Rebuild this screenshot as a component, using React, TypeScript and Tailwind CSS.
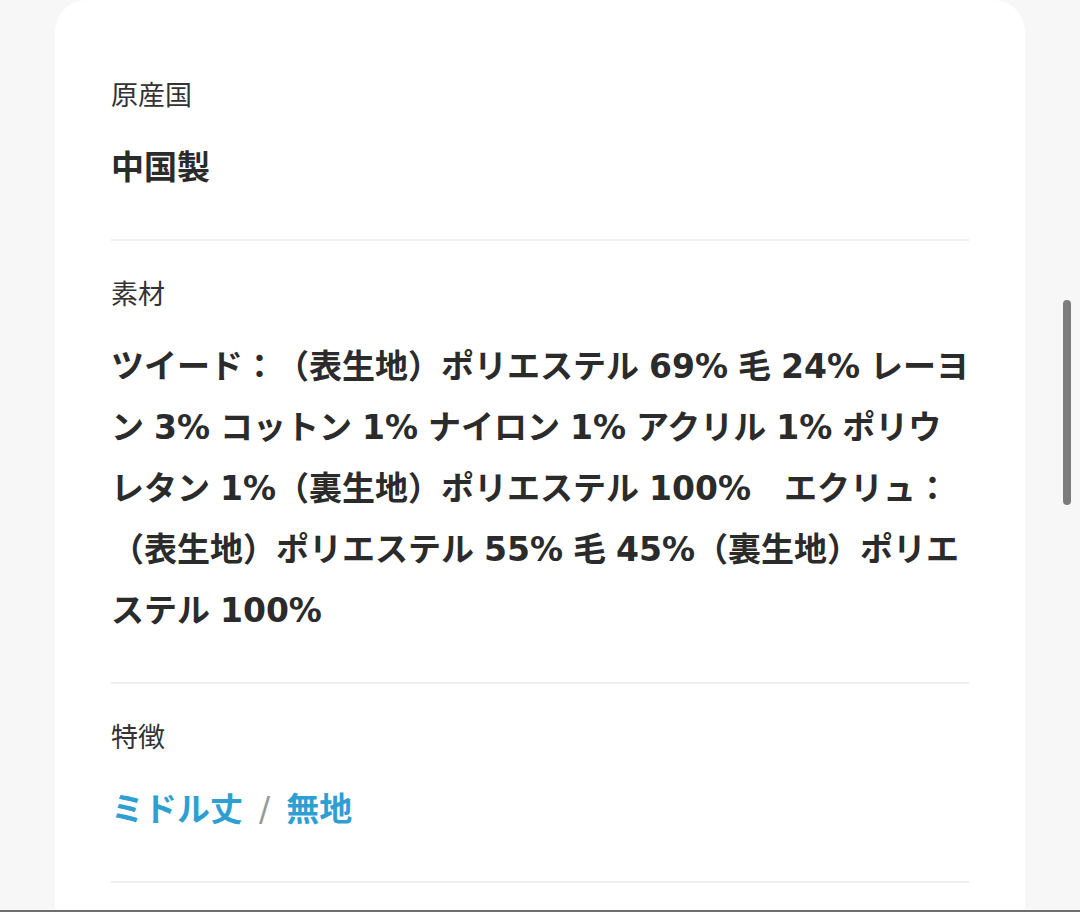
import React from 'react';

const Section = ({ label, children }: { label: string; children: React.ReactNode }) => {
  return (
    <div className="pt-[36px] pb-[41px] border-b-2 border-[#efefef]">
      <p className="text-[27px] leading-[36px] text-[#333333]">{label}</p>
      <div className="mt-[23px] text-[33px] leading-[61px] font-bold text-[#2b2b2b] [word-spacing:-1.5px]">{children}</div>
    </div>
  );
};

const App = () => {
  return (
    <div
      className="relative h-[912px] w-[1080px] overflow-hidden bg-[#f7f7f7] [text-spacing-trim:space-all]"
      style={{ fontFamily: '"DejaVu Sans", "Noto Sans CJK JP", sans-serif' }}
    >
      <div className="ml-[55px] w-[970px] min-h-[960px] rounded-t-[32px] bg-white px-[56px] pt-[42px]">
        <Section label="原産国">中国製</Section>

        <Section label="素材">
          ツイード：（表生地）ポリエステル 69% 毛 24% レーヨン 3% コットン 1% ナイロン 1% アクリル 1% ポリウレタン 1%（裏生地）ポリエステル 100%　エクリュ：（表生地）ポリエステル 55% 毛 45%（裏生地）ポリエステル 100%
        </Section>

        <Section label="特徴">
          <div className="flex items-center">
            <span className="text-[#2f9fd2]">ミドル丈</span>
            <span className="mx-[16px] font-normal text-[#9a9a9a]">/</span>
            <span className="text-[#2f9fd2]">無地</span>
          </div>
        </Section>
      </div>

      {/* scrollbar */}
      <div className="absolute left-[1063px] top-[300px] h-[205px] w-[8px] rounded-full bg-[#7c7c7c]" />

      {/* bottom edge */}
      <div className="absolute bottom-0 left-0 h-[3px] w-full border-t border-[#fafafa] bg-[#6e6e6e]" />
    </div>
  );
};

export default App;
